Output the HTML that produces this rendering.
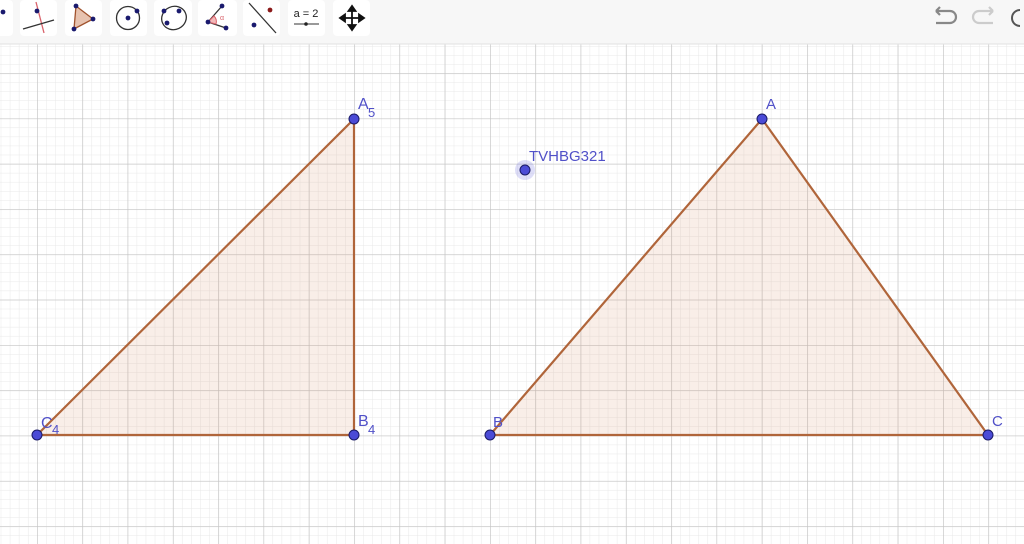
<!DOCTYPE html>
<html><head><meta charset="utf-8"><style>
html,body{margin:0;padding:0;width:1024px;height:544px;overflow:hidden;background:#fff;font-family:"Liberation Sans",sans-serif}
svg{display:block}
</style></head><body>
<svg width="1024" height="544" viewBox="0 0 1024 544">
<defs>
<pattern id="minor" x="37" y="118.5" width="9.06" height="9.06" patternUnits="userSpaceOnUse">
<path d="M0 0V9.06M0 0H9.06" stroke="#e8e8e8" stroke-width="1" fill="none"/>
</pattern>
<pattern id="major" x="37" y="118.5" width="45.3" height="45.3" patternUnits="userSpaceOnUse">
<path d="M0 0V45.3M0 0H45.3" stroke="#c4c4c4" stroke-width="1.3" fill="none"/>
</pattern>
</defs>
<rect width="1024" height="544" fill="#fff"/>
<rect y="44" width="1024" height="500" fill="url(#minor)"/>
<rect y="44" width="1024" height="500" fill="url(#major)"/>
<!-- toolbar -->
<rect width="1024" height="44" fill="#f7f7f7"/>
<line x1="0" y1="44" x2="1024" y2="44" stroke="#e2e2e2"/>
<g fill="#fff">
<rect x="-10" y="0" width="23" height="36" rx="4"/>
<rect x="20" y="0" width="37" height="36" rx="4"/>
<rect x="65" y="0" width="37" height="36" rx="4"/>
<rect x="110" y="0" width="37" height="36" rx="4"/>
<rect x="154" y="0" width="38" height="36" rx="4"/>
<rect x="198" y="0" width="39" height="36" rx="4"/>
<rect x="243" y="0" width="37" height="36" rx="4"/>
<rect x="288" y="0" width="37" height="36" rx="4"/>
<rect x="333" y="0" width="37" height="36" rx="4"/>
</g>
<circle cx="3" cy="12" r="2.4" fill="#1a1a6e"/>
<line x1="36" y1="2" x2="44" y2="33" stroke="#d9626b" stroke-width="1.3"/>
<line x1="23" y1="29" x2="54" y2="20" stroke="#333" stroke-width="1.3"/>
<circle cx="37" cy="11" r="2.4" fill="#1a1a6e"/>
<polygon points="76,6 93,19 74,29" fill="#e7c3b0" stroke="#a0522d" stroke-width="1.3"/>
<circle cx="76" cy="6" r="2.4" fill="#1a1a6e"/><circle cx="93" cy="19" r="2.4" fill="#1a1a6e"/><circle cx="74" cy="29" r="2.4" fill="#1a1a6e"/>
<circle cx="128" cy="18" r="11.5" fill="none" stroke="#333" stroke-width="1.3"/>
<circle cx="128" cy="18" r="2.4" fill="#1a1a6e"/><circle cx="137" cy="11" r="2.4" fill="#1a1a6e"/>
<ellipse cx="174" cy="18" rx="12.5" ry="11.5" transform="rotate(-25 174 18)" fill="none" stroke="#333" stroke-width="1.3"/>
<circle cx="164" cy="11" r="2.4" fill="#1a1a6e"/><circle cx="179" cy="11" r="2.4" fill="#1a1a6e"/><circle cx="167" cy="23" r="2.4" fill="#1a1a6e"/>
<path d="M208 22L222 6M208 22L226 28" stroke="#333" stroke-width="1.3" fill="none"/>
<path d="M208 22L214 16A8 8 0 0 1 216 24Z" fill="#f3b8b8" stroke="#d9626b"/>
<text x="220" y="20" font-size="7" fill="#d9626b">α</text>
<circle cx="208" cy="22" r="2.4" fill="#1a1a6e"/><circle cx="222" cy="6" r="2.4" fill="#1a1a6e"/><circle cx="226" cy="28" r="2.4" fill="#1a1a6e"/>
<line x1="249" y1="3" x2="276" y2="33" stroke="#333" stroke-width="1.3"/>
<circle cx="270" cy="10" r="2.4" fill="#8b1a1a"/><circle cx="254" cy="25" r="2.4" fill="#1a1a6e"/>
<text x="306" y="17" font-size="11" text-anchor="middle" fill="#222">a = 2</text>
<line x1="294" y1="24" x2="319" y2="24" stroke="#333"/><circle cx="306" cy="24" r="1.8" fill="#222"/>
<g stroke="#111" stroke-width="1.8" fill="#111">
<line x1="342" y1="18" x2="362" y2="18"/><line x1="352" y1="8" x2="352" y2="28"/>
<polygon points="340,18 345,14.5 345,21.5"/><polygon points="364,18 359,14.5 359,21.5"/>
<polygon points="352,6 348.5,11 355.5,11"/><polygon points="352,30 348.5,25 355.5,25"/>
</g>
<path d="M936 11h14a6 6 0 0 1 0 12h-14M936 11l4-4M936 11l4 4" stroke="#888" stroke-width="2.2" fill="none"/>
<path d="M993 11h-14a6 6 0 0 0 0 12h14M993 11l-4-4M993 11l-4 4" stroke="#ccc" stroke-width="2.2" fill="none"/>
<path d="M1024 10a8 8 0 0 0 0 16" stroke="#555" stroke-width="2" fill="none" transform="translate(-4 0)"/>
<!-- triangles -->
<g stroke="#b0653a" stroke-width="2.2" fill="rgba(215,140,100,0.15)" stroke-linejoin="round">
<polygon points="354,119 354,435 37,435"/>
<polygon points="762,119 490,435 988,435"/>
</g>
<circle cx="525" cy="170" r="10" fill="rgba(90,90,220,0.2)"/>
<g fill="#4b4bd6" stroke="#1a1a66" stroke-width="1">
<circle cx="354" cy="119" r="5"/><circle cx="354" cy="435" r="5"/><circle cx="37" cy="435" r="5"/>
<circle cx="762" cy="119" r="5"/><circle cx="490" cy="435" r="5"/><circle cx="988" cy="435" r="5"/>
<circle cx="525" cy="170" r="5"/>
</g>
<g fill="#5050c8" font-size="16">
<text x="358" y="109">A</text><text x="368" y="117" font-size="13">5</text>
<text x="358" y="426">B</text><text x="368" y="434" font-size="13">4</text>
<text x="41" y="428">C</text><text x="52" y="434" font-size="13">4</text>
<text x="766" y="109" font-size="15">A</text>
<text x="493" y="427" font-size="15">B</text>
<text x="992" y="426" font-size="15">C</text>
<text x="529" y="161" font-size="15">TVHBG321</text>
</g>
</svg>
</body></html>
